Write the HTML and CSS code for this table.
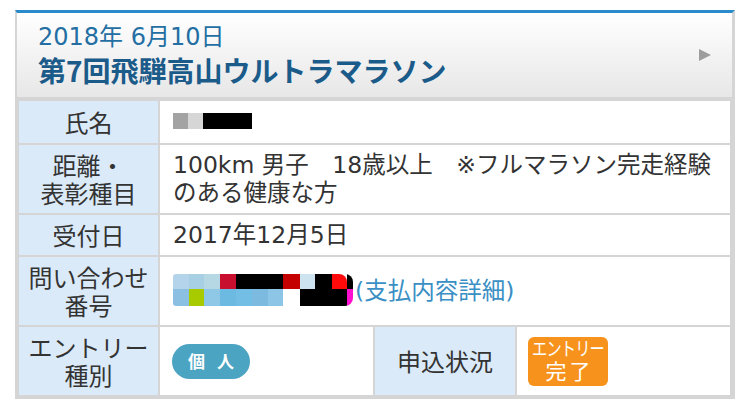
FILE: index.html
```html
<!DOCTYPE html>
<html lang="ja">
<head>
<meta charset="utf-8">
<link rel="stylesheet" href="styles.css">
</head>
<body>
<div class="card">
  <div class="head">
    <div class="head-text">
      <div class="date">2018年 6月10日</div>
      <div class="title">第7回飛騨高山ウルトラマラソン</div>
    </div>
    <span class="arrow"></span>
  </div>
  <div class="grid">
    <div class="lbl">氏名</div>
    <div class="val wide">
      <span class="name-mask"><i class="n1"></i><i class="n2"></i><i class="n3"></i></span>
    </div>

    <div class="lbl">距離・<br>表彰種目</div>
    <div class="val wide">100km 男子　18歳以上　※フルマラソン完走経験<br>のある健康な方</div>

    <div class="lbl">受付日</div>
    <div class="val wide">2017年12月5日</div>

    <div class="lbl">問い合わせ<br>番号</div>
    <div class="val wide">
      <span class="num-mask">
        <span class="mrow r1"><i class="c-a w16"></i><i class="c-b w15"></i><i class="c-c w16"></i><i class="c-red w16"></i><i class="c-k w47"></i><i class="c-red2 w17"></i><i class="c-d w15"></i><i class="c-k w17"></i><i class="c-red3 w15"></i><i class="c-k w6"></i></span>
        <span class="mrow r2"><i class="c-e w16"></i><i class="c-lime w15"></i><i class="c-f w16"></i><i class="c-g w16"></i><i class="c-h w16"></i><i class="c-i w16"></i><i class="c-j w15"></i><i class="c-w w17"></i><i class="c-k w47"></i><i class="c-mag w6"></i></span>
      </span><a class="link" href="#">(支払内容詳細)</a>
    </div>

    <div class="lbl">エントリー<br>種別</div>
    <div class="val"><span class="pill">個 人</span></div>
    <div class="lbl">申込状況</div>
    <div class="val"><span class="done"><span class="done-top">エントリー</span><span class="done-bot">完了</span></span></div>
  </div>
</div>
</body>
</html>
```

FILE: styles.css
```css
html, body {
  margin: 0;
  padding: 0;
  background: #ffffff;
}

body {
  font-family: "DejaVu Sans", "Noto Sans CJK JP", sans-serif;
  color: #333333;
}

.card {
  box-sizing: border-box;
  width: 720px;
  margin: 10px 0 0 15px;
  border-top: 3px solid #2a8bca;
  border-left: 2px solid #d5d5d5;
  border-right: 3px solid #d5d5d5;
  border-bottom: 2px solid #d5d5d5;
}

.head {
  box-sizing: border-box;
  height: 86px;
  display: flex;
  align-items: center;
  justify-content: space-between;
  padding: 0 21px 0 21px;
  background: linear-gradient(#ffffff, #e7e7e7);
  border-bottom: 2px solid #d5d5d5;
}

.head-text {
  display: flex;
  flex-direction: column;
}

.date {
  font-size: 24px;
  line-height: 30px;
  color: #236fa3;
}

.title {
  font-family: "Noto Sans CJK JP", sans-serif;
  font-size: 28px;
  line-height: 36px;
  font-weight: 700;
  color: #1b5b8a;
}

.arrow {
  width: 0;
  height: 0;
  border-left: 12px solid #9d9d9d;
  border-top: 6px solid transparent;
  border-bottom: 6px solid transparent;
}

.grid {
  display: grid;
  grid-template-columns: 139px 213px 140px 213px;
  grid-template-rows: 42px 68px 40px 68px 68px;
  gap: 2px;
  padding: 2px;
  background: #d5d5d5;
}

.lbl {
  background: #dbeaf8;
  display: flex;
  align-items: center;
  justify-content: center;
  text-align: center;
  font-family: "Noto Sans CJK JP", sans-serif;
  font-size: 24px;
  line-height: 28px;
}

.val {
  background: #ffffff;
  display: flex;
  align-items: center;
  padding-left: 13px;
  font-size: 23.5px;
  line-height: 28px;
  white-space: nowrap;
}

.wide {
  grid-column: 2 / 5;
}

.name-mask {
  display: flex;
  height: 16px;
  margin-top: -3px;
}

.name-mask i {
  display: block;
  height: 16px;
}

.n1 { width: 15px; background: #a3a3a3; }
.n2 { width: 15px; background: #d6d6d6; }
.n3 { width: 49px; background: #000000; }

.num-mask {
  display: flex;
  flex-direction: column;
  width: 180px;
  border-radius: 3px 8px 8px 3px;
  overflow: hidden;
  margin-top: -2px;
}

.mrow {
  display: flex;
}

.r1 { height: 15px; }
.r2 { height: 17px; }

.mrow i { display: block; flex: none; }

.w6 { width: 6px; }
.w15 { width: 15px; }
.w16 { width: 16px; }
.w17 { width: 17px; }
.w47 { width: 47px; }

.c-a { background: #b3d4ea; }
.c-b { background: #a8d0e5; }
.c-c { background: #b6d8e4; }
.c-red { background: #c8102e; }
.c-k { background: #000000; }
.c-red2 { background: #c40000; }
.c-d { background: #cde3ef; }
.c-red3 { background: #ff0a0a; border-radius: 0 8px 0 0; }
.c-e { background: #8cc0e3; }
.c-lime { background: #a8cb00; }
.c-f { background: #8fc8e6; }
.c-g { background: #6cb9e1; }
.c-h { background: #72bee4; }
.c-i { background: #7cbae0; }
.c-j { background: #8dc5e6; }
.c-w { background: #ffffff; }
.c-mag { background: #ff10d0; }

.link {
  color: #3a8fc5;
  text-decoration: none;
  margin-left: 2px;
}

.pill {
  display: inline-flex;
  align-items: center;
  justify-content: center;
  width: 78px;
  height: 35px;
  border-radius: 18px;
  background: #4ca4c3;
  color: #ffffff;
  font-family: "Noto Sans CJK JP", sans-serif;
  font-size: 17px;
  font-weight: 700;
  letter-spacing: 4px;
  text-indent: 4px;
  margin-left: -1px;
}

.done {
  display: inline-flex;
  flex-direction: column;
  align-items: center;
  justify-content: flex-start;
  box-sizing: border-box;
  padding-top: 1px;
  width: 80px;
  height: 49px;
  border-radius: 6px;
  background: #f7931d;
  color: #ffffff;
  margin-left: -2px;
  font-family: "Noto Sans CJK JP", sans-serif;
}

.done-top {
  font-size: 19px;
  line-height: 20px;
  transform: scaleX(0.8);
  white-space: nowrap;
  letter-spacing: -1px;
}

.done-bot {
  font-size: 21px;
  line-height: 24px;
  letter-spacing: 3px;
  margin-left: 3px;
}
```
